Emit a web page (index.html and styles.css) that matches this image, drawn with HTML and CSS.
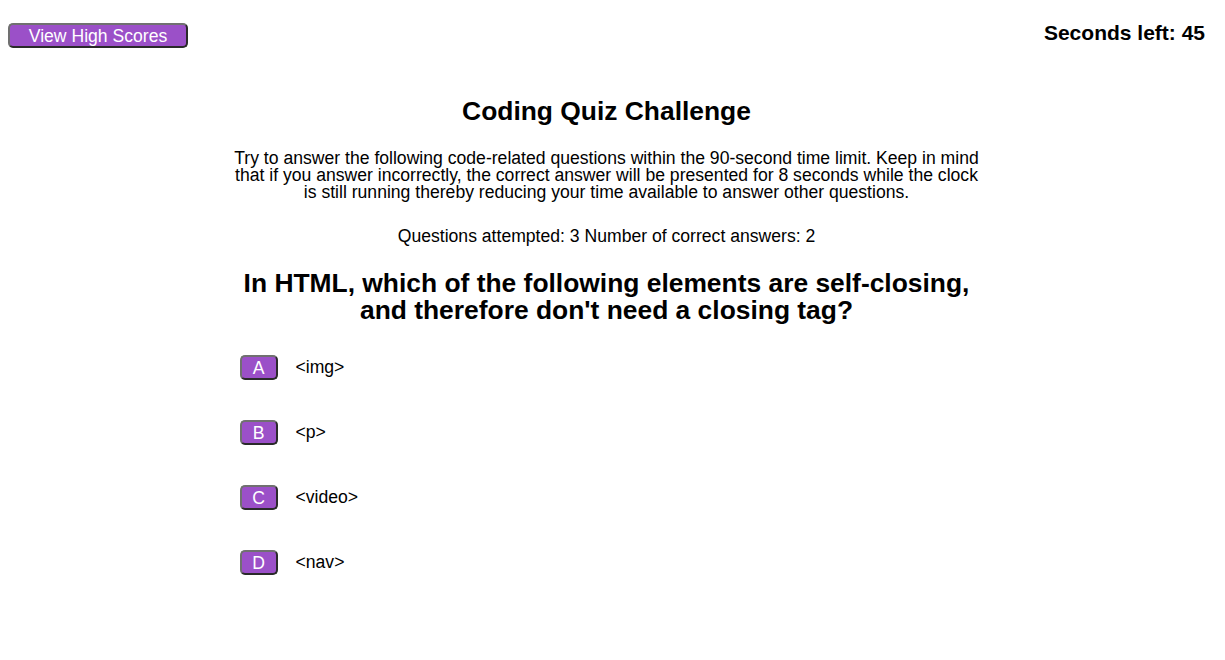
FILE: index.html
```html
<!DOCTYPE html>
<html>
<head>
<meta charset="utf-8">
<title>Coding Quiz Challenge</title>
<link rel="stylesheet" href="styles.css">
</head>
<body>
<header class="topbar">
  <button class="btn btn-scores">View High Scores</button>
  <div class="timer">Seconds left: 45</div>
</header>
<main class="quiz">
  <h1 class="title">Coding Quiz Challenge</h1>
  <p class="intro">Try to answer the following code-related questions within the 90-second time limit. Keep in mind that if you answer incorrectly, the correct answer will be presented for 8 seconds while the clock is still running thereby reducing your time available to answer other questions.</p>
  <p class="stats">Questions attempted: 3 Number of correct answers: 2</p>
  <h2 class="question">In HTML, which of the following elements are self-closing, and therefore don't need a closing tag?</h2>
  <ul class="answers">
    <li class="answer"><button class="btn btn-letter">A</button><span class="answer-text">&lt;img&gt;</span></li>
    <li class="answer"><button class="btn btn-letter">B</button><span class="answer-text">&lt;p&gt;</span></li>
    <li class="answer"><button class="btn btn-letter">C</button><span class="answer-text">&lt;video&gt;</span></li>
    <li class="answer"><button class="btn btn-letter">D</button><span class="answer-text">&lt;nav&gt;</span></li>
  </ul>
</main>
</body>
</html>
```
FILE: styles.css
```css
html, body {
  margin: 0;
  padding: 0;
  background: #ffffff;
  color: #000000;
  font-family: "Liberation Sans", Arial, Helvetica, sans-serif;
}

body {
  padding: 0 20px 0 8px;
}

.topbar {
  display: flex;
  justify-content: space-between;
  align-items: flex-start;
  padding-top: 23px;
}

.btn {
  background: #9b50c8;
  color: #ffffff;
  font-family: "Liberation Sans", Arial, Helvetica, sans-serif;
  font-size: 17.6px;
  border: 2px solid;
  border-color: #707070 #2a2a2a #2a2a2a #707070;
  border-radius: 5px;
  padding: 0;
  line-height: 20px;
  cursor: pointer;
}

.btn-scores {
  width: 180px;
  height: 25px;
}

.timer {
  font-size: 21px;
  font-weight: bold;
  line-height: 20px;
}

.quiz {
  width: 750px;
  margin: 0 auto;
  text-align: center;
}

.title {
  font-size: 26.4px;
  font-weight: bold;
  margin: 48px 0 0;
  line-height: 30px;
}

.intro {
  font-size: 17.6px;
  line-height: 17px;
  margin: 24px 0 0;
}

.stats {
  font-size: 17.6px;
  line-height: 18px;
  margin: 26px 0 0;
}

.question {
  font-size: 26.4px;
  font-weight: bold;
  line-height: 27px;
  margin: 25px 0 0;
  padding: 0 8px;
}

.answers {
  list-style: none;
  margin: 31px 0 0;
  padding: 0 0 0 8px;
  text-align: left;
  display: flex;
  flex-direction: column;
  gap: 40px;
}

.answer {
  display: flex;
  align-items: center;
  gap: 18px;
  height: 25px;
}

.btn-letter {
  width: 38px;
  height: 25px;
}

.answer-text {
  font-size: 17.6px;
}
```
